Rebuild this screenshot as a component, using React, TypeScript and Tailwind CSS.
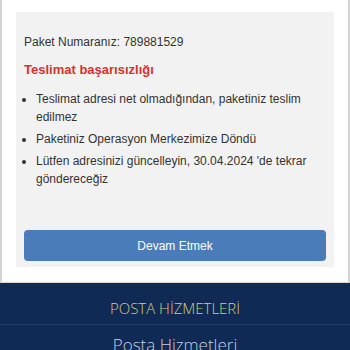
import React from "react";

export default function App() {
  return (
    <div className="w-[350px] h-[350px] overflow-hidden bg-white">
      <div className="h-[283px] border-x-2 border-[#d4d4d4] border-b border-b-[#d8d8d8] bg-white px-[14px] pt-[12px]">
        <div
          className="bg-[#f2f2f2] h-[255px] px-[8px] pt-[21px] text-[#333] text-[12px] leading-[18px]"
          style={{ fontFamily: "'Liberation Sans', Arial, sans-serif" }}
        >
          <p>Paket Numaranız: 789881529</p>
          <p className="mt-[10px] font-bold text-[13px] text-[#d8322f]">Teslimat başarısızlığı</p>
          <ul className="mt-[11px] list-disc pl-[12px] pr-[10px] flex flex-col gap-[4px]">
            <li>Teslimat adresi net olmadığından, paketiniz teslim edilmez</li>
            <li>Paketiniz Operasyon Merkezimize Döndü</li>
            <li>Lütfen adresinizi güncelleyin, 30.04.2024 'de tekrar göndereceğiz</li>
          </ul>
          <button className="mt-[42px] w-full h-[31px] rounded-[4px] bg-[#4b7cba] text-white text-[12px]">
            Devam Etmek
          </button>
        </div>
      </div>
      <div className="bg-[#0f2a55]" style={{ fontFamily: "'Open Sans', sans-serif" }}>
        <div className="h-[42px] flex justify-center border-b border-[#1f3a66] text-[15px] font-light text-[#d8cc78] pt-[15px] leading-[20px]">
          POSTA HİZMETLERİ
        </div>
        <div className="h-[40px] flex justify-center text-[17px] font-light text-[#c9d0dc] pt-[8px] leading-[24px]">
          Posta Hizmetleri
        </div>
      </div>
    </div>
  );
}
